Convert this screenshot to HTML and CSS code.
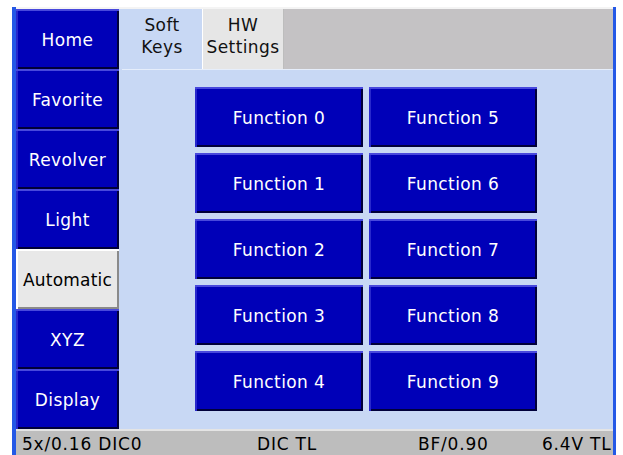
FILE: index.html
```html
<!DOCTYPE html>
<html lang="en">
<head>
    <meta charset="UTF-8">
    <title>Soft Keys</title>
    <link rel="stylesheet" href="styles.css">
</head>
<body>
    <div id="screen">
        <div id="main">
            <div id="nav">
                <div class="nav_btn">Home</div>
                <div class="nav_btn">Favorite</div>
                <div class="nav_btn">Revolver</div>
                <div class="nav_btn">Light</div>
                <div class="nav_btn active">Automatic</div>
                <div class="nav_btn">XYZ</div>
                <div class="nav_btn">Display</div>
            </div>
            <div id="content">
                <div id="tabs">
                    <div class="tab selected">Soft<br>Keys</div>
                    <div class="tab">HW<br>Settings</div>
                    <div class="tab_fill"></div>
                </div>
                <div id="panel">
                    <div id="keys">
                        <div class="key">Function 0</div>
                        <div class="key">Function 5</div>
                        <div class="key">Function 1</div>
                        <div class="key">Function 6</div>
                        <div class="key">Function 2</div>
                        <div class="key">Function 7</div>
                        <div class="key">Function 3</div>
                        <div class="key">Function 8</div>
                        <div class="key">Function 4</div>
                        <div class="key">Function 9</div>
                    </div>
                </div>
            </div>
        </div>
        <div id="status">
            <span>5x/0.16 DIC0</span>
            <span>DIC TL</span>
            <span>BF/0.90</span>
            <span>6.4V TL</span>
        </div>
    </div>
</body>
</html>
```

FILE: styles.css
```css
* {
    margin: 0;
    padding: 0;
    box-sizing: border-box;
}

body {
    background: #ffffff;
    font-family: "DejaVu Sans", sans-serif;
    font-size: 17px;
    letter-spacing: 0.4px;
}

#screen {
    width: 604px;
    height: 448px;
    margin: 7px 0 0 12px;
    padding-top: 2px;
    border-left: 4px solid #2458e6;
    border-right: 3px solid #2458e6;
    background: #f4f4f4;
    display: flex;
    flex-direction: column;
    overflow: hidden;
}

#main {
    height: 420px;
    display: flex;
    background: #c8d8f4;
}

#nav {
    width: 103px;
    display: flex;
    flex-direction: column;
}

.nav_btn {
    height: 60px;
    display: flex;
    align-items: center;
    justify-content: center;
    padding-top: 2px;
    background: #0000b8;
    color: #ffffff;
    box-shadow: inset 0 2px 0 #4848dc, inset 2px 0 0 #2828cc, inset -2px -2px 0 #00003a;
}

.nav_btn.active {
    background: #e8e8e8;
    color: #000000;
    letter-spacing: 0.2px;
    box-shadow: inset 0 2px 0 #ffffff, inset 2px 0 0 #ffffff, inset -2px -2px 0 #8a8a8a;
}

#content {
    flex: 1;
    margin-left: 3px;
    display: flex;
    flex-direction: column;
}

#tabs {
    height: 61px;
    display: flex;
    border-bottom: 1px solid #e6eefb;
}

.tab {
    width: 81px;
    display: flex;
    align-items: center;
    justify-content: center;
    text-align: center;
    line-height: 22px;
    padding-bottom: 6px;
    background: #e6e6e6;
    color: #111111;
    border-right: 1px solid #bdbdbd;
}

.tab.selected {
    background: #c8d8f4;
    border-right: 1px solid #ffffff;
}

.tab_fill {
    flex: 1;
    background: #c4c2c4;
}

#panel {
    flex: 1;
    padding: 17px 0 0 73px;
}

#keys {
    display: grid;
    grid-template-columns: 168px 168px;
    grid-auto-rows: 60px;
    column-gap: 6px;
    row-gap: 6px;
}

.key {
    display: flex;
    align-items: center;
    justify-content: center;
    padding-top: 1px;
    background: #0000b8;
    color: #ffffff;
    box-shadow: inset 0 2px 0 #4848dc, inset 2px 0 0 #2828cc, inset -2px -2px 0 #00003a;
}

#status {
    flex: 1;
    display: grid;
    grid-template-columns: 235px 161px 124px 1fr;
    align-items: center;
    padding: 2px 0 0 6px;
    border-top: 2px solid #e4e4e4;
    background: #bdbdbd;
    color: #000000;
    letter-spacing: 0.8px;
}
```
